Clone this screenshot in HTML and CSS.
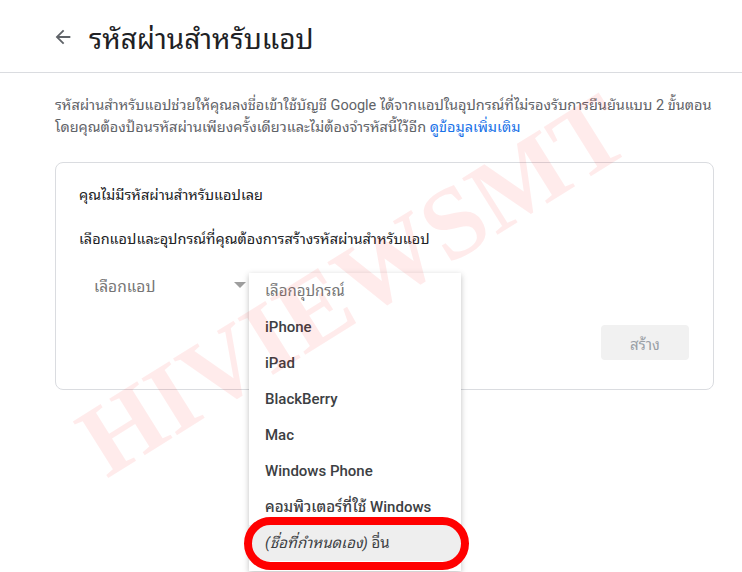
FILE: index.html
```html
<!DOCTYPE html>
<html lang="th">
<head>
    <meta charset="UTF-8">
    <meta name="viewport" content="width=device-width, initial-scale=1.0">
    <title>รหัสผ่านสำหรับแอป</title>
    <link rel="stylesheet" href="styles.css">
</head>
<body>
    <!-- หัวเรื่อง -->
    <div class="header">
        <svg class="back" width="22" height="22" viewBox="0 0 24 24"><path d="M20 11H7.83l5.59-5.59L12 4l-8 8 8 8 1.41-1.41L7.83 13H20v-2z" fill="#5f6368"/></svg>
        <h1>รหัสผ่านสำหรับแอป</h1>
    </div>

    <p class="desc">รหัสผ่านสำหรับแอปช่วยให้คุณลงชื่อเข้าใช้บัญชี Google ได้จากแอปในอุปกรณ์ที่ไม่รองรับการยืนยันแบบ 2 ขั้นตอน<br>โดยคุณต้องป้อนรหัสผ่านเพียงครั้งเดียวและไม่ต้องจำรหัสนี้ไว้อีก <a href="#">ดูข้อมูลเพิ่มเติม</a></p>

    <!-- การ์ด -->
    <div class="card">
        <div class="empty">คุณไม่มีรหัสผ่านสำหรับแอปเลย</div>
        <div class="hint">เลือกแอปและอุปกรณ์ที่คุณต้องการสร้างรหัสผ่านสำหรับแอป</div>
        <div class="select">
            <span>เลือกแอป</span>
            <span class="arrow"></span>
        </div>
        <div class="actions">
            <button class="create">สร้าง</button>
        </div>
    </div>

    <!-- รายการอุปกรณ์ (เปิดอยู่) -->
    <div class="menu">
        <div class="opt placeholder">เลือกอุปกรณ์</div>
        <div class="opt">iPhone</div>
        <div class="opt">iPad</div>
        <div class="opt">BlackBerry</div>
        <div class="opt">Mac</div>
        <div class="opt">Windows Phone</div>
        <div class="opt">คอมพิวเตอร์ที่ใช้ Windows</div>
        <div class="opt selected"><i>(ชื่อที่กำหนดเอง)</i> อื่น</div>
    </div>
    <div class="ring"></div>

    <div class="watermark">HIVIEWSMT</div>
</body>
</html>
```

FILE: styles.css
```css
body {
    margin: 0;
    font-family: Roboto, "Noto Sans Thai Looped", Loma, Garuda, Tahoma, "Noto Sans Thai", sans-serif;
    background-color: #fff;
    color: #202124;
}

/* หัวเรื่อง */
.header {
    display: flex;
    align-items: center;
    height: 72px;
    padding-left: 52px;
    border-bottom: 1px solid #dadce0;
}

.header .back {
    margin-right: 15px;
    margin-top: 2px;
}

.header h1 {
    margin: 0;
    font-size: 28px;
    font-weight: 400;
    color: #202124;
}

.desc {
    margin: 22px 0 0 55px;
    font-size: 14.5px;
    line-height: 22px;
    color: #5f6368;
    white-space: nowrap;
}

.desc a {
    color: #1a73e8;
    text-decoration: none;
}

/* การ์ด */
.card {
    margin: 23px 0 0 55px;
    width: 610px;
    height: 180px;
    padding: 22px 24px 24px 23px;
    border: 1px solid #dadce0;
    border-radius: 8px;
}

.empty {
    font-size: 14.5px;
    line-height: 22px;
}

.hint {
    margin-top: 22px;
    font-size: 14.5px;
    line-height: 22px;
}

.select {
    display: flex;
    align-items: center;
    justify-content: space-between;
    width: 152px;
    height: 36px;
    margin-top: 16px;
    padding: 0 4px 0 15px;
    font-size: 15.5px;
    color: #757575;
}

.select .arrow {
    width: 0;
    height: 0;
    border-left: 6px solid transparent;
    border-right: 6px solid transparent;
    border-top: 6px solid #9e9e9e;
}

.actions {
    display: flex;
    justify-content: flex-end;
    margin-top: 22px;
}

.create {
    width: 88px;
    height: 35px;
    border: none;
    border-radius: 4px;
    background-color: #f1f1f1;
    color: #9aa0a6;
    font-family: inherit;
    font-size: 15px;
}

/* รายการอุปกรณ์ */
.menu {
    position: absolute;
    left: 249px;
    top: 273px;
    width: 212px;
    padding-bottom: 10px;
    background-color: #fff;
    box-shadow: 0 2px 6px rgba(0, 0, 0, 0.25);
    z-index: 2;
}

.opt {
    height: 36px;
    line-height: 36px;
    padding-left: 16px;
    font-size: 15px;
    font-weight: 500;
    color: #3c4043;
    white-space: nowrap;
}

.opt.placeholder {
    font-weight: 400;
    font-size: 15px;
    color: #757575;
}

.opt.selected {
    background-color: #eeeeee;
    font-weight: 400;
    color: #3c4043;
}

.ring {
    position: absolute;
    left: 244px;
    top: 517px;
    width: 209px;
    height: 37px;
    border: 8px solid #f00;
    border-radius: 27px;
    z-index: 3;
}

.watermark {
    position: absolute;
    left: 41px;
    top: 226px;
    font-family: "Liberation Serif", serif;
    font-weight: bold;
    font-size: 102px;
    line-height: 117px;
    color: rgba(255, 0, 0, 0.08);
    transform: rotate(-32deg);
    pointer-events: none;
    z-index: 5;
}
```
